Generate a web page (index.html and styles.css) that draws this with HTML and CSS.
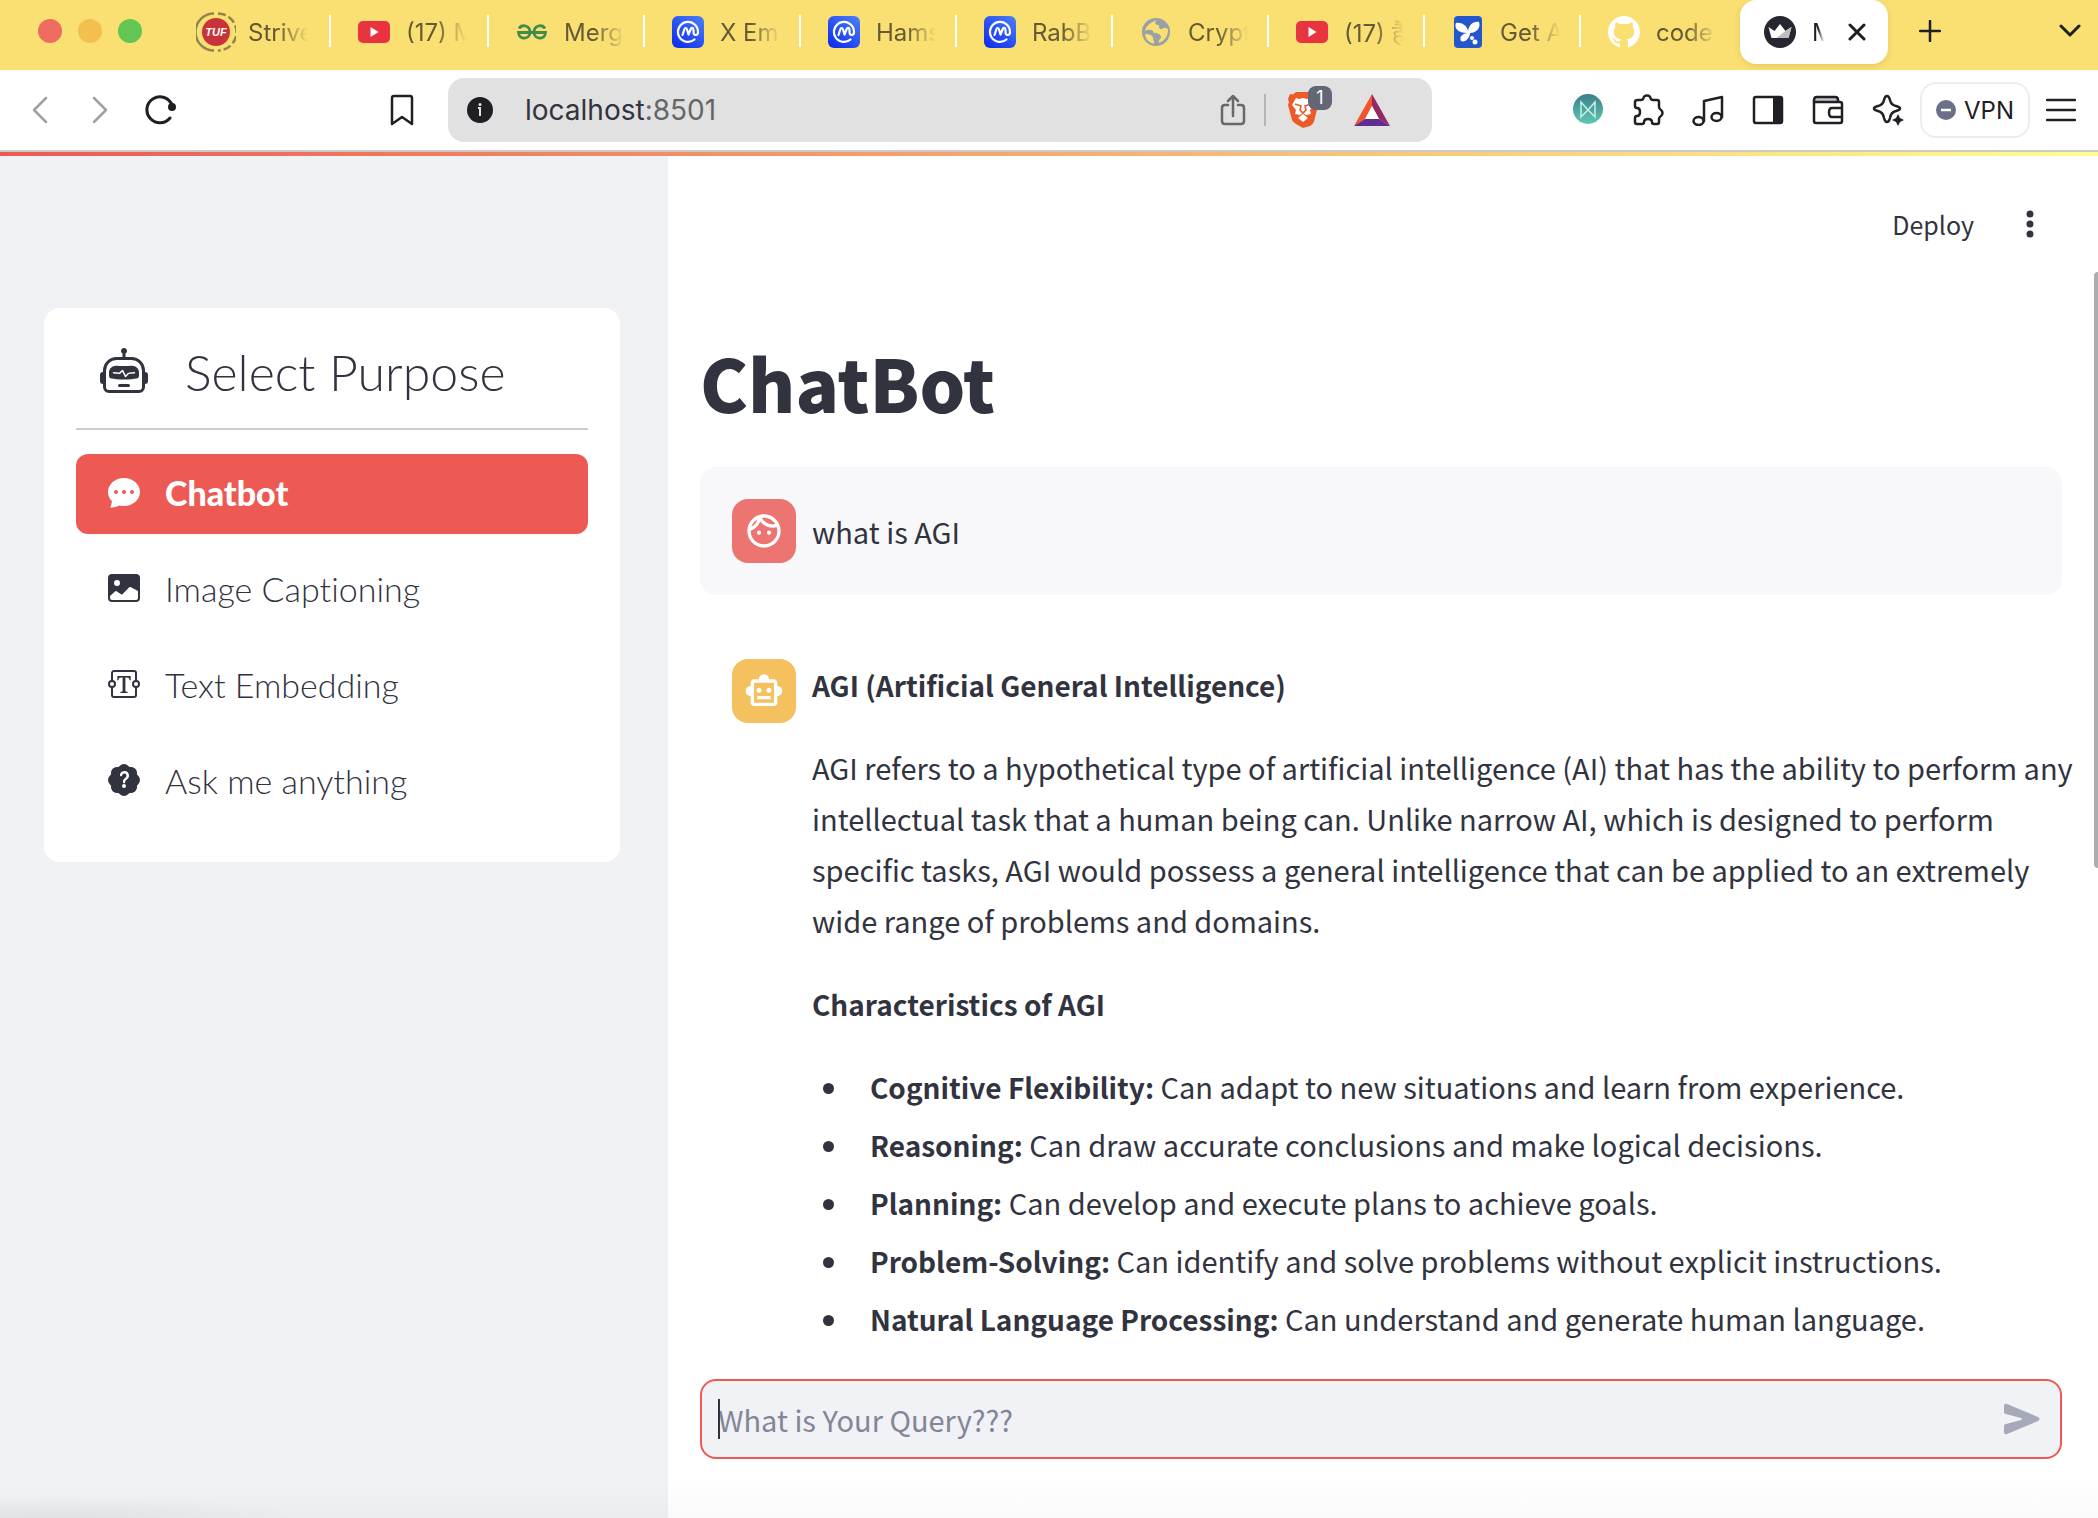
FILE: index.html
```html
<!DOCTYPE html>
<html lang="en">
<head>
<meta charset="utf-8">
<title>ChatBot</title>
<link rel="stylesheet" href="styles.css">
</head>
<body>
<svg class="defs" aria-hidden="true">
  <defs>
    <linearGradient id="cmc-fill" x1="1" y1="0" x2="0.2" y2="1"><stop offset="0" stop-color="#4c80f7"/><stop offset="1" stop-color="#1130f0"/></linearGradient>
    <linearGradient id="teal-fill" x1="0" y1="0" x2="0" y2="1"><stop offset="0" stop-color="#3c7f86"/><stop offset="1" stop-color="#5cc9b4"/></linearGradient>
    <symbol id="cmc" viewBox="0 0 32 32">
      <rect width="32" height="32" rx="6" fill="url(#cmc-fill)"/>
      <path d="M22.500 23.500A10 10 0 1 1 26 16c0 4-4.500 4-4.500 0v-2c0-2.500-2-3-3-.5l-2 5-1.500-5c-.6-2-2-2-2.700 0L10.500 19" fill="none" stroke="#fff" stroke-width="2.200" stroke-linecap="round" stroke-linejoin="round"/>
    </symbol>
    <symbol id="youtube" viewBox="0 0 32 32">
      <rect y="5" width="32" height="22" rx="5" fill="#ea3340"/><path d="M12.500 11v10l8-5z" fill="#fff"/>
    </symbol>
  </defs>
</svg>

<header class="browser">
  <div class="tabstrip">
    <div class="lights"><span class="light red"></span><span class="light amber"></span><span class="light green"></span></div>
    <nav class="tabs" aria-label="Tabs">
      <a class="tab wide" href="#t1"><svg class="favicon big" viewBox="0 0 40 40"><circle cx="20" cy="20" r="14" fill="#c73338"/><path d="M18 1.500A18.500 18.500 0 0 0 18 38.500" fill="none" stroke="#8f8648" stroke-width="2.500"/><path d="M22 1.500A18.500 18.500 0 0 1 22 38.500" fill="none" stroke="#8f8648" stroke-width="2.500" stroke-dasharray="8 3"/><text x="20" y="24" text-anchor="middle" class="tuf">TUF</text></svg><span class="tab-title">Strive</span></a>
      <a class="tab wide" href="#t2"><svg class="favicon"><use href="#youtube"/></svg><span class="tab-title">(17) M</span></a>
      <a class="tab" href="#t3"><svg class="favicon" viewBox="0 0 32 32"><path d="M3 12.500C6 8 14 9 14 16.500c0 7-11 8-11.500 0H29.500c-.5 8-11.500 7-11.500 0C18 9 26 8 29 12.500" fill="none" stroke="#3f8d4d" stroke-width="2.800"/></svg><span class="tab-title">Merg</span></a>
      <a class="tab" href="#t4"><svg class="favicon"><use href="#cmc"/></svg><span class="tab-title">X Em</span></a>
      <a class="tab" href="#t5"><svg class="favicon"><use href="#cmc"/></svg><span class="tab-title">Hams</span></a>
      <a class="tab" href="#t6"><svg class="favicon"><use href="#cmc"/></svg><span class="tab-title">RabB</span></a>
      <a class="tab" href="#t7"><svg class="favicon" viewBox="0 0 32 32"><circle cx="16" cy="16" r="14" fill="#9aa0a6"/><path d="M17 4.500c-3 2-2 4 1 4.500 2 .5 0 4 3 4s2-3 7 0c.5 6-3 12-9 14-1-3 2-4 2-6s-3-4-6-4-1-3-4-3-2-1-6 1c1-5 5-9 12-10.500zM5 18c4 0 8 1 8 4s2 3 1 5.500C9 27 5.500 23 5 18z" fill="#fadf73"/></svg><span class="tab-title">Crypt</span></a>
      <a class="tab" href="#t8"><svg class="favicon"><use href="#youtube"/></svg><span class="tab-title">(17) है</span></a>
      <a class="tab" href="#t9"><svg class="favicon" viewBox="0 0 32 32"><rect x="2" width="28" height="32" rx="4" fill="#2457cc"/><path d="M15 17C5 17 2 11 4 7c5-1 11 2 12 8 1-6 5-10 11-9 2 5-2 11-9 11 0 5-5 10-9 8-2-4 1-7 6-8z" fill="#fff"/><circle cx="20" cy="22" r="2" fill="#fff"/><circle cx="23" cy="26" r="2.500" fill="#fff"/></svg><span class="tab-title">Get A</span></a>
      <a class="tab last" href="#t10"><svg class="favicon" viewBox="0 0 16 16"><path fill="#fff" d="M8 0C3.580 0 0 3.580 0 8c0 3.540 2.290 6.530 5.470 7.590.4.070.55-.17.55-.38 0-.19-.01-.82-.01-1.490-2.010.37-2.530-.49-2.690-.94-.09-.23-.48-.94-.82-1.130-.28-.15-.68-.52-.01-.53.63-.01 1.080.58 1.230.82.72 1.210 1.870.87 2.330.66.070-.52.28-.87.51-1.070-1.780-.2-3.640-.89-3.640-3.950 0-.87.31-1.590.82-2.150-.08-.2-.36-1.020.08-2.120 0 0 .67-.21 2.200.82a7.600 7.600 0 0 1 4 0c1.530-1.040 2.200-.82 2.200-.82.44 1.100.16 1.920.08 2.120.51.56.82 1.270.82 2.150 0 3.070-1.870 3.750-3.650 3.950.29.25.54.73.54 1.480 0 1.070-.01 1.930-.01 2.200 0 .21.15.46.55.38A8 8 0 0 0 16 8c0-4.420-3.580-8-8-8z"/></svg><span class="tab-title">code</span></a>
      <div class="tab active"><svg class="favicon" viewBox="0 0 32 32"><circle cx="16" cy="16" r="16" fill="#262730"/><path d="M4.500 11l6 4L16 8l5.500 7 6-4-3 11h-17z" fill="#fff"/><path d="M27.500 11l-6 4-9 7h12z" fill="#bdbdc2"/></svg><span class="tab-title">M</span><button class="icon-btn" aria-label="Close tab"><svg width="18" height="18" viewBox="0 0 18 18"><path d="M2 2l14 14M16 2L2 16" class="line heavy"/></svg></button></div>
    </nav>
    <button class="icon-btn new-tab" aria-label="New tab"><svg width="22" height="22" viewBox="0 0 22 22"><path d="M11 1v20M1 11h20" class="line"/></svg></button>
    <button class="icon-btn tab-list" aria-label="List tabs"><svg width="22" height="14" viewBox="0 0 22 14"><path d="M2 2l9 9 9-9" class="line heavy"/></svg></button>
  </div>

  <div class="toolbar">
    <div class="nav-buttons">
      <button class="icon-btn" aria-label="Back"><svg width="32" height="32" viewBox="0 0 32 32"><path d="M22 4L10 16l12 12" class="line pale"/></svg></button>
      <button class="icon-btn" aria-label="Forward"><svg width="32" height="32" viewBox="0 0 32 32"><path d="M10 4l12 12-12 12" class="line pale"/></svg></button>
      <button class="icon-btn" aria-label="Reload"><svg width="32" height="32" viewBox="0 0 32 32"><path d="M26 24A13 13 0 1 1 28 11" class="line heavy"/><circle cx="28" cy="13" r="4" fill="#1f2024"/></svg></button>
    </div>
    <button class="icon-btn bookmark" aria-label="Bookmark"><svg width="24" height="32" viewBox="0 0 24 32"><path d="M2 4q0-2 2-2h16q2 0 2 2v26l-10-7-10 7z" class="line"/></svg></button>
    <div class="urlbar">
      <svg width="26" height="26" viewBox="0 0 26 26"><circle cx="13" cy="13" r="13" fill="#1f2024"/><path d="M11 11h2v8" stroke="#e1e1e1" stroke-width="2" fill="none"/><circle cx="13" cy="7.500" r="1.500" fill="#e1e1e1"/></svg>
      <span class="url">localhost<span class="port">:8501</span></span>
      <button class="icon-btn" aria-label="Share"><svg width="26" height="34" viewBox="0 0 26 34"><path d="M8 12H5q-3 0-3 3v13q0 3 3 3h16q3 0 3-3V15q0-3-3-3h-3M13 23V3M8 8l5-5 5 5" class="line grey"/></svg></button>
      <span class="url-sep"></span>
      <button class="icon-btn shield" aria-label="Brave Shields"><svg width="30" height="36" viewBox="0 0 30 36"><path d="M8 0h14l3 3 3-.500 2 5-1 3 1 3-4 16q-1 3-4 4.500L15 36l-7-4q-3-1.500-4-4L0 13l1-3-1-3 2-5 3 .500z" fill="#ee5a27"/><path d="M8 6l3 1 4-1 4 1 3-1 4 7-4 5 1 4-5 1-3-2-3 2-5-1 1-4-4-5z" fill="#fff"/><path d="M10 26l5-4 5 4-5 4z" fill="#fff"/><path d="M7 12l6 2-1 4 3 3 3-3-1-4 6-2" stroke="#ee5a27" stroke-width="1.600" fill="none"/></svg><span class="badge">1</span></button>
      <button class="icon-btn" aria-label="Rewards"><svg width="36" height="32" viewBox="0 0 36 32"><path d="M18 0L0 32l11-7 7-13z" fill="#f0552c"/><path d="M18 0l18 32-11-7-7-13z" fill="#952a62"/><path d="M0 32h36l-11-7H11z" fill="#5f2d91"/><path d="M18 12l7 13H11z" fill="#fff"/></svg></button>
    </div>
    <div class="extensions">
      <button class="icon-btn" aria-label="Extension"><svg width="32" height="32" viewBox="0 0 32 32"><circle cx="16" cy="15" r="15" fill="url(#teal-fill)"/><path d="M9 23V8l7 8 7-8v15l-7-7z" fill="none" stroke="#c9efe6" stroke-width="1.500"/></svg></button>
      <button class="icon-btn" aria-label="Extensions"><svg width="32" height="32" viewBox="0 0 32 32"><path d="M6 6h3q2 0 2.500-2Q12 1.500 15 1.500T18.500 4Q19 6 21 6h4q2 0 2 2v5q0 2 2 3 1.500 1 1.500 3T29 22q-2 1-2 3v3q0 2-2 2h-3q-2 0-2-2 0-3-4-3t-4 3q0 2-2 2H5q-2 0-2-2v-4q0-2 2-2 3 0 3-4t-3-4q-2 0-2-2V8q0-2 3-2z" class="line"/></svg></button>
      <button class="icon-btn" aria-label="Playlist"><svg width="32" height="32" viewBox="0 0 32 32"><path d="M12 27V7l18-4v20" class="line"/><ellipse cx="6.500" cy="27" rx="5" ry="4" class="line"/><ellipse cx="24.500" cy="23" rx="5" ry="4" class="line"/></svg></button>
      <button class="icon-btn" aria-label="Side panel"><svg width="32" height="32" viewBox="0 0 32 32"><rect x="2" y="3" width="28" height="26" rx="2" class="line"/><path d="M21 3h9v26h-9z" fill="#1f2024"/></svg></button>
      <button class="icon-btn" aria-label="Wallet"><svg width="32" height="32" viewBox="0 0 32 32"><path d="M3 4h22v4H3z" fill="#c4c2cc"/><path d="M2 8h26q2 0 2 2v17q0 2-2 2H4q-2 0-2-2V6q0-3 3-3h18q3 0 3 3v2M30 14H20q-3 0-3 4.500t3 4.500h10" class="line"/></svg></button>
      <button class="icon-btn" aria-label="Leo"><svg width="32" height="32" viewBox="0 0 32 32"><path d="M15 2q2 0 2.500 3 1.500 6 8 8 3 1 3 2t-3 2q-6 2-8 8-1 4-2.500 4t-2.500-4q-2-6-8-8-3-1-3-2t3-2q6-2 8-8 1-3 2.500-3z" fill="none"/><path d="M15 2q2 0 3 4 1 5 6 6 4 1 4 2.500T24 17q-5 1-6 7-1 4-3 4t-3-4q-1-6-6-7-4-1-4-2.500T6 12q5-1 6-6 1-4 3-4z" class="line"/><path d="M26 20l2 4 4 2-4 2-2 4-2-4-4-2 4-2z" fill="#1f2024" stroke="#fff" stroke-width="1" paint-order="stroke"/></svg></button>
    </div>
    <button class="vpn"><svg width="20" height="20" viewBox="0 0 20 20"><circle cx="10" cy="10" r="10" fill="#6c6f88"/><path d="M5 10h10" stroke="#fff" stroke-width="2.500"/></svg>VPN</button>
    <button class="icon-btn" aria-label="Menu"><svg width="30" height="26" viewBox="0 0 30 26"><path d="M1 3h28M1 13h28M1 23h28" class="line"/></svg></button>
  </div>
</header>

<div class="app">
  <aside class="sidebar">
    <nav class="menu" aria-labelledby="menu-title">
      <h2 class="menu-title" id="menu-title"><svg width="48" height="48" viewBox="0 0 16 16" fill="#31333f"><path d="M6 12.500a.5.500 0 0 1 .5-.5h3a.5.500 0 0 1 0 1h-3a.5.500 0 0 1-.5-.5M3 8.062C3 6.760 4.235 5.765 5.530 5.886a26.600 26.600 0 0 0 4.940 0C11.765 5.765 13 6.760 13 8.062v1.157a.93.930 0 0 1-.765.935c-.845.147-2.340.346-4.235.346s-3.390-.2-4.235-.346A.93.930 0 0 1 3 9.219zm4.542-.827a.25.250 0 0 0-.217.068l-.92.900a25 25 0 0 1-1.871-.183.250.250 0 0 0-.068.495c.55.076 1.232.149 2.020.193a.25.250 0 0 0 .189-.071l.754-.736.847 1.710a.25.250 0 0 0 .404.062l.932-.97a25 25 0 0 0 1.922-.188.250.250 0 0 0-.068-.495c-.538.074-1.207.145-1.980.189a.25.250 0 0 0-.166.076l-.754.785-.842-1.700a.25.250 0 0 0-.182-.135"/><path d="M8.500 1.866a1 1 0 1 0-1 0V3h-2A4.500 4.500 0 0 0 1 7.500V8a1 1 0 0 0-1 1v2a1 1 0 0 0 1 1v1a2 2 0 0 0 2 2h10a2 2 0 0 0 2-2v-1a1 1 0 0 0 1-1V9a1 1 0 0 0-1-1v-.5A4.500 4.500 0 0 0 10.500 3h-2zM14 7.500V13a1 1 0 0 1-1 1H3a1 1 0 0 1-1-1V7.500A3.500 3.500 0 0 1 5.500 4h5A3.500 3.500 0 0 1 14 7.500"/></svg>Select Purpose</h2>
      <a class="menu-item selected" href="#chatbot"><svg class="menu-icon" viewBox="0 0 16 16"><path d="M16 8c0 3.866-3.582 7-8 7a9 9 0 0 1-2.347-.306c-.584.296-1.925.864-4.181 1.234-.2.032-.352-.176-.273-.362.354-.836.674-1.950.77-2.966C.744 11.370 0 9.760 0 8c0-3.866 3.582-7 8-7s8 3.134 8 7M5 8a1 1 0 1 0-2 0 1 1 0 0 0 2 0m4 0a1 1 0 1 0-2 0 1 1 0 0 0 2 0m3 1a1 1 0 1 0 0-2 1 1 0 0 0 0 2"/></svg>Chatbot</a>
      <a class="menu-item" href="#image"><svg class="menu-icon" viewBox="0 0 16 16"><path d="M.002 3a2 2 0 0 1 2-2h12a2 2 0 0 1 2 2v10a2 2 0 0 1-2 2h-12a2 2 0 0 1-2-2zm1 9v1a1 1 0 0 0 1 1h12a1 1 0 0 0 1-1V9.500l-3.777-1.947a.5.500 0 0 0-.577.093l-3.710 3.710-2.660-1.772a.5.500 0 0 0-.63.062zm5-6.500a1.500 1.500 0 1 0-3 0 1.500 1.500 0 0 0 3 0"/></svg>Image Captioning</a>
      <a class="menu-item" href="#text"><svg class="menu-icon" viewBox="0 0 16 16"><path fill="none" stroke="#31333f" d="M2 6.500V2.500a1 1 0 0 1 1-1h10a1 1 0 0 1 1 1v4M2 9.500v4a1 1 0 0 0 1 1h10a1 1 0 0 0 1-1v-4"/><circle cx="2" cy="8" r="1.500" fill="none" stroke="#31333f"/><circle cx="14" cy="8" r="1.500" fill="none" stroke="#31333f"/><path d="M11.300 4H4.700l-.1 2.100h.6c.1-1.100.4-1.400 1.700-1.400h.4v6.400c0 .6-.1.700-1.100.8v.6h3.600v-.6c-1-.1-1.100-.2-1.100-.8V4.700h.4c1.300 0 1.600.3 1.700 1.400h.6z"/></svg>Text Embedding</a>
      <a class="menu-item" href="#ask"><svg class="menu-icon" viewBox="0 0 16 16"><path d="M5.933.87a2.890 2.890 0 0 1 4.134 0l.622.638.890-.011a2.890 2.890 0 0 1 2.924 2.924l-.010.890.636.622a2.890 2.890 0 0 1 0 4.134l-.637.622.011.890a2.890 2.890 0 0 1-2.924 2.924l-.890-.010-.622.636a2.890 2.890 0 0 1-4.134 0l-.622-.637-.890.011a2.890 2.890 0 0 1-2.924-2.924l.010-.890-.636-.622a2.890 2.890 0 0 1 0-4.134l.637-.622-.011-.890a2.890 2.890 0 0 1 2.924-2.924l.890.010zM7.002 11a1 1 0 1 0 2 0 1 1 0 0 0-2 0m1.602-2.027c.040-.534.198-.815.846-1.260.674-.475 1.050-1.090 1.050-1.986 0-1.325-.920-2.227-2.262-2.227-1.020 0-1.792.492-2.100 1.290A1.700 1.700 0 0 0 6 5.480c0 .393.203.640.545.640.272 0 .455-.147.564-.510.158-.592.525-.915 1.074-.915.610 0 1.030.446 1.030 1.084 0 .563-.208.885-.822 1.325-.619.433-.926.914-.926 1.640v.111c0 .428.208.745.585.745.336 0 .504-.240.554-.627"/></svg>Ask me anything</a>
    </nav>
  </aside>

  <main class="main">
    <div class="app-bar">
      <button class="deploy">Deploy</button>
      <button class="icon-btn" aria-label="More options"><svg width="8" height="28" viewBox="0 0 8 28" fill="#31333f"><circle cx="4" cy="4" r="3.500"/><circle cx="4" cy="14" r="3.500"/><circle cx="4" cy="24" r="3.500"/></svg></button>
    </div>
    <div class="content">
      <h1 class="page-title">ChatBot</h1>
      <article class="message user">
        <div class="avatar"><svg width="40" height="40" viewBox="0 0 24 24" fill="#fff"><path d="M10.250 13a1.250 1.250 0 1 1-2.500 0 1.250 1.250 0 0 1 2.500 0M15 11.750a1.250 1.250 0 1 0 0 2.500 1.250 1.250 0 0 0 0-2.500m7 .250c0 5.520-4.480 10-10 10S2 17.520 2 12 6.480 2 12 2s10 4.480 10 10M10.660 4.120C12.060 6.440 14.600 8 17.500 8c.460 0 .910-.050 1.340-.120C17.440 5.560 14.900 4 12 4c-.460 0-.910.050-1.340.120M4.420 9.470a8.050 8.050 0 0 0 3.660-4.440 8.040 8.040 0 0 0-3.660 4.440M20 12c0-.780-.120-1.530-.330-2.240-.700.150-1.420.240-2.170.240a10 10 0 0 1-7.760-3.690A10 10 0 0 1 4 11.860c.010.040 0 .090 0 .140 0 4.410 3.590 8 8 8s8-3.590 8-8"/></svg></div>
        <p>what is AGI</p>
      </article>
      <article class="message bot">
        <div class="avatar"><svg width="40" height="40" viewBox="0 0 24 24" fill="#fff"><path d="M20 9V7c0-1.100-.9-2-2-2h-3c0-1.660-1.340-3-3-3S9 3.340 9 5H6c-1.100 0-2 .9-2 2v2c-1.660 0-3 1.340-3 3s1.340 3 3 3v4c0 1.100.9 2 2 2h12c1.100 0 2-.9 2-2v-4c1.660 0 3-1.340 3-3s-1.340-3-3-3m-2 10H6V7h12zm-9-6a1.500 1.500 0 1 1 0-3 1.500 1.500 0 0 1 0 3m7.500-1.500a1.500 1.500 0 1 1-3 0 1.500 1.500 0 0 1 3 0M8 15h8v2H8z"/></svg></div>
        <div class="answer">
          <p><strong>AGI (Artificial General Intelligence)</strong></p>
          <p>AGI refers to a hypothetical type of artificial intelligence (AI) that has the ability to perform any intellectual task that a human being can. Unlike narrow AI, which is designed to perform specific tasks, AGI would possess a general intelligence that can be applied to an extremely wide range of problems and domains.</p>
          <p><strong>Characteristics of AGI</strong></p>
          <ul>
            <li><strong>Cognitive Flexibility:</strong> Can adapt to new situations and learn from experience.</li>
            <li><strong>Reasoning:</strong> Can draw accurate conclusions and make logical decisions.</li>
            <li><strong>Planning:</strong> Can develop and execute plans to achieve goals.</li>
            <li><strong>Problem-Solving:</strong> Can identify and solve problems without explicit instructions.</li>
            <li><strong>Natural Language Processing:</strong> Can understand and generate human language.</li>
          </ul>
        </div>
      </article>
      <form class="query">
        <span class="caret"></span>
        <input class="query-input" type="text" aria-label="Query" placeholder="What is Your Query???">
        <button class="icon-btn" type="button" aria-label="Send"><svg width="36" height="32" viewBox="0 0 36 32"><path d="M0 3Q0 0 3 1l31 13q3 2 0 4L3 31q-3 1-3-2v-6q0-2 2-2l15-4q2-1 0-2L2 11q-2 0-2-2z" fill="#a6a9b9"/></svg></button>
      </form>
    </div>
    <div class="scroll-thumb"></div>
  </main>
</div>
</body>
</html>
```
FILE: styles.css
```css
* { box-sizing: border-box; }

body {
  margin: 0;
  min-height: 100vh;
  display: flex;
  flex-direction: column;
  color: #31333f;
  background: #fff;
  font-family: "Noto Sans CJK SC", sans-serif;
  font-size: 29px;
}

button, input { font: inherit; color: inherit; border: 0; background: none; padding: 0; }
h1, h2, p, ul { margin: 0; padding: 0; }
a { color: inherit; text-decoration: none; }
svg { display: block; flex: none; }
.defs { position: absolute; width: 0; height: 0; }

.icon-btn { display: flex; flex: none; }
.line { fill: none; stroke: #1f2024; stroke-width: 2.500; stroke-linecap: round; stroke-linejoin: round; }
.heavy { stroke-width: 3; }
.pale { stroke: #a0a0a0; }
.grey { stroke: #68686a; }

/* Browser chrome */
.browser {
  font-family: Inter, "Liberation Sans", sans-serif;
  border-bottom: 2px solid #cbcbcb;
}

.tabstrip { display: flex; align-items: center; height: 70px; background: #fadf73; }
.lights { display: flex; gap: 16px; padding: 0 30px 8px 38px; }
.light { width: 24px; height: 24px; border-radius: 50%; }
.red { background: #ed6b5f; }
.amber { background: #f5bf4f; }
.green { background: #62c554; }

.tabs { display: flex; align-self: stretch; align-items: flex-start; }
.tab { position: relative; display: flex; align-items: center; gap: 16px; width: 156px; height: 64px; padding-left: 28px; font-size: 24px; color: #645a35; }
.tab.wide { width: 158px; }
.tab:not(.active):not(.last)::after { content: ""; position: absolute; right: -1px; top: 15px; width: 2px; height: 32px; background: #fff; }
.favicon { width: 32px; height: 32px; }
.favicon.big { width: 40px; height: 40px; margin: 0 -4px; }
.tuf { font: italic bold 11px "Liberation Sans", sans-serif; fill: #fff; }
.tab-title { width: 60px; white-space: nowrap; mask-image: linear-gradient(to right, #000 50%, transparent); }
.tab.active { width: 148px; margin-left: 4px; padding-left: 24px; background: #fff; color: #1f2024; border-radius: 16px; box-shadow: 0 2px 6px #c9a93c66; }
.active .tab-title { width: 12px; }
.active .icon-btn { margin-left: 8px; }
.new-tab { margin: 0 0 8px 31px; }
.tab-list { margin: 0 17px 8px auto; }

.toolbar { display: flex; align-items: center; height: 80px; padding: 0 22px 0 24px; }
.nav-buttons { display: flex; gap: 28px; }
.bookmark { margin: 0 34px 0 auto; }
.urlbar { display: flex; align-items: center; flex: 0 1 984px; height: 64px; padding: 0 42px 0 19px; background: #e1e1e1; border-radius: 16px; }
.url { flex: 1; margin-left: 32px; font-size: 28px; }
.port { color: #65666a; }
.url-sep { width: 2px; height: 32px; margin: 0 22px 0 18px; background: #b5b5b5; }
.shield { position: relative; margin-right: 36px; }
.badge { position: absolute; left: 20px; top: -6px; width: 24px; height: 24px; border-radius: 8px; background: #636674; color: #fff; font-size: 18px; line-height: 24px; text-align: center; }
.extensions { display: flex; gap: 28px; margin: 0 16px 0 140px; }
.vpn { display: flex; align-items: center; justify-content: center; gap: 8px; width: 110px; height: 56px; margin-right: 16px; border: 2px solid #ededef; border-radius: 16px; color: #1f2024; font-size: 24px; }

/* App */
.app { position: relative; flex: 1; display: flex; border-top: 4px solid; border-image: linear-gradient(to right, #ec5953, #ffff8c) 1; }
.sidebar {
  flex: 0 0 668px;
  padding: 152px 48px 0 44px;
  background: radial-gradient(ellipse 240px 20px at 60px 100%, #e0e1e5, transparent), linear-gradient(#f0f2f6 calc(100% - 40px), #ebecf0);
}

.menu { display: flex; flex-direction: column; gap: 16px; padding: 32px 32px 40px; border-radius: 16px; background: #fff; font-family: Lato, sans-serif; font-variant-ligatures: none; }
.menu-title { display: flex; align-items: center; gap: 37px; height: 90px; padding: 0 0 24px 24px; margin-bottom: 8px; border-bottom: 2px solid #cbccd0; font-size: 50px; font-weight: 300; }
.menu-item { display: flex; align-items: center; gap: 25px; height: 80px; padding: 0 32px 4px; border-radius: 12px; font-size: 34px; font-weight: 300; }
.selected { background: #ed5a53; color: #fff; font-weight: 900; }
.menu-icon { width: 32px; height: 32px; fill: currentColor; }

.main { position: relative; flex: 1; min-width: 0; padding: 0 36px 56px 32px; background: linear-gradient(#fff calc(100% - 40px), #fafafa); }
.app-bar { display: flex; justify-content: flex-end; align-items: center; gap: 52px; height: 136px; padding-right: 28px; }
.deploy { font-size: 25px; }
.page-title { margin: 42px 0 37px; font-size: 72px; line-height: 96px; font-weight: 900; }

.message { display: flex; gap: 16px; padding: 32px; border-radius: 16px; line-height: 51px; }
.message p { min-width: 0; }
.user { align-items: center; background: #f8f8fb; }
.bot { padding-right: 0; padding-bottom: 28px; margin: 32px -16px 0 0; }
.avatar { display: flex; flex: none; align-items: center; justify-content: center; width: 64px; height: 64px; border-radius: 16px; }
.user .avatar { background: #ed7571; }
.bot .avatar { background: #f5c05e; }
.answer { display: flex; flex-direction: column; gap: 32px; min-width: 0; }
.answer strong { font-size: 28px; line-height: 1; }
.answer ul { padding-left: 40px; }
.answer li { margin-bottom: 7px; padding-left: 18px; }

.query { position: relative; display: flex; align-items: center; height: 80px; padding: 0 20px 0 16px; border: 2px solid #ed5a53; border-radius: 16px; background: #f0f2f6; }
.query-input { flex: 1; min-width: 0; outline: 0; }
.query-input::placeholder { color: #838696; opacity: 1; }
.caret { position: absolute; left: 16px; top: 18px; width: 2px; height: 40px; background: #31333f; }
.scroll-thumb { position: absolute; right: 0; top: 116px; width: 4px; height: 596px; background: #acadb1; border-radius: 4px 0 0 4px; }
```
